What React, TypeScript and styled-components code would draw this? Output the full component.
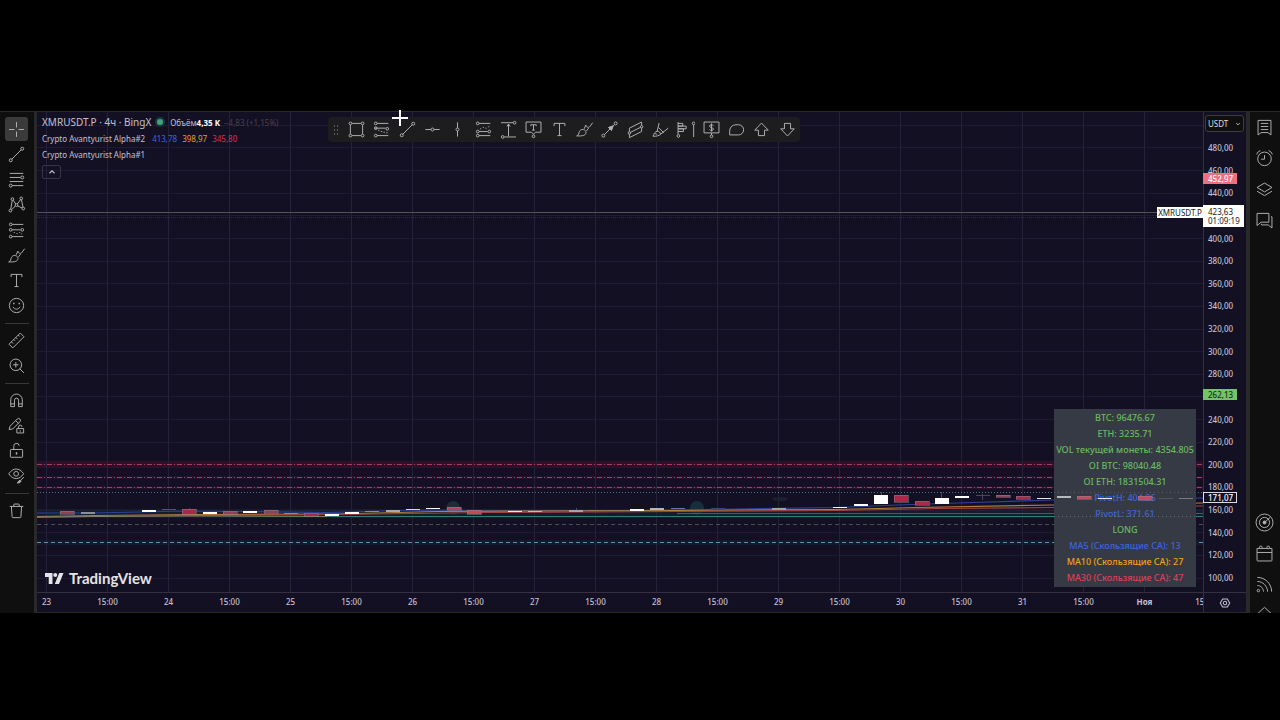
import React from 'react';
import styled, { createGlobalStyle } from 'styled-components';

const Global = createGlobalStyle`
  * { box-sizing: border-box; }
  body { margin: 0; background: #000; }
  body, button, select { font-family: "Noto Sans", "Open Sans", sans-serif; font-size: 8px; }
  button { padding: 0; border: 0; background: none; color: inherit; cursor: pointer; }
`;

/* ---------- page frame ---------- */

const Page = styled.div`
  display: grid;
  grid-template-rows: 111px minmax(502px, 1fr) 107px;
  min-height: 100vh;
`;

const Terminal = styled.main`
  grid-row: 2;
  position: relative;
  display: grid;
  grid-template-columns: 34px minmax(0, 1fr) 30px;
  border-top: 1px solid #2b2b2e;
  background: #0f0f0f;
  color: #c3c0cf;
`;

const Workspace = styled.section`
  display: grid;
  grid-template-columns: minmax(0, 1fr) 43px;
  grid-template-rows: minmax(0, 1fr) 19px;
  border-left: 3px solid #29292c;
  border-right: 4px solid #29292c;
  border-bottom: 1px solid #29292c;
  background: #141024;
`;

/* ---------- icons ---------- */

const Glyph = styled.svg<{ $size: number }>`
  display: block;
  width: ${(p) => p.$size}px;
  height: ${(p) => p.$size}px;
  fill: none;
  stroke: currentColor;
  stroke-width: 1.4;
`;

const shapes = {
  cross: <path d="M14 3v8M14 17v8M3 14h8M17 14h8" />,
  line: <><circle cx="5.5" cy="22.5" r="2.2" /><circle cx="22.5" cy="5.5" r="2.2" /><path d="M7 21 21 7" /></>,
  fib: <><path d="M4 5h20M4 11h16M4 17h20M8 23h16" /><circle cx="22.5" cy="11" r="2.2" /><circle cx="5.5" cy="23" r="2.2" /></>,
  pattern: <><circle cx="5" cy="23" r="2" /><circle cx="8" cy="6" r="2" /><circle cx="14" cy="15" r="2" /><circle cx="21" cy="5" r="2" /><circle cx="24" cy="20" r="2" /><path d="M5.500 21 7.700 8M9.200 7.700 13 13.400M15.200 13.400 20 6.800M21.300 7 23.600 18M6.600 21.800 12.400 16.300M15.700 16 22.300 19.200" /></>,
  position: <><path d="M7.500 5H24M7.500 13H20M7.500 23H24" /><circle cx="5.500" cy="5" r="2" /><circle cx="5.500" cy="13" r="2" /><circle cx="22.500" cy="13" r="2" /><circle cx="5.500" cy="23" r="2" /><path d="M10 17h1.500M14 18.500h1.500M18 17h1.500M21 19h1.500" /></>,
  projection: <><path d="M7.500 5H24M4 12h16M7.500 23H24" /><circle cx="5.500" cy="5" r="2" /><circle cx="5.500" cy="12" r="2" /><circle cx="22.500" cy="13" r="2" /><circle cx="5.500" cy="23" r="2" /><path d="M9 15h2M13 17h2M17 18h2M21 19h2" /></>,
  forecast: <><path d="M7.500 5H24M7.500 17H20M7.500 23H24" /><circle cx="5.500" cy="5" r="2" /><circle cx="5.500" cy="17" r="2" /><circle cx="22.500" cy="17" r="2" /><circle cx="5.500" cy="23" r="2" /><path d="M9 13h1.500M13 11h1.500M17 12h1.500M21 10h1.500" /></>,
  brush: <path d="M2.500 23.500c3-1 3-4 4-6.500 1.500-3.500 6-4 8.500-1.500 2.300 2.500 1 6-2 7-3 1.200-6 1-10.500 1ZM13.500 13 16 7.500c1 3.500 4 4.500 6 2L26 4M17 16l3-4" />,
  text: <path d="M6 9V5h16v4M14 5v18M11 23h6" />,
  smile: <><circle cx="14" cy="14" r="10.500" /><path d="M9 16c1.500 4.500 8.500 4.500 10 0" /><path d="M10 10v2M18 10v2" strokeWidth="2" /></>,
  ruler: <path d="m3 19.500 16.500-16.500 5.500 5.500L8.500 25ZM6.500 16l2.500 2.500M10 12.500l2 2M13 9.500l2.500 2.500M16.500 6l2 2" />,
  zoom: <><circle cx="13" cy="13" r="8.500" /><path d="m19 19 6 6M13 9v8M9 13h8" /></>,
  magnet: <path d="M5.500 23V13a8.500 8.500 0 0 1 17 0v10h-5.500V13.500a3 3 0 0 0-6 0V23ZM5.500 19H11M17 19h5.500" />,
  pencilLock: <><path d="m3 20 1.500-5L15 4.500a2.500 2.500 0 0 1 4 4L8.500 19ZM13 7l4 4" /><path d="M14.500 18.500h10V25h-10ZM17 18.500V16a2.500 2.500 0 0 1 5 0" /><path d="M19.500 21v2" /></>,
  lock: <><path d="M6 12.500h16a1 1 0 0 1 1 1V23a1 1 0 0 1-1 1H6a1 1 0 0 1-1-1v-9.500a1 1 0 0 1 1-1ZM10 12.500V8a4 4 0 0 1 8-1" /><path d="M14 16.500v3.500" strokeWidth="2.200" /></>,
  eye: <><path d="M2.500 11.500C6 6.500 9.500 4.500 13.500 4.500s7.500 2 11 7c-3.500 5-7 7-11 7s-7.500-2-11-7Z" /><circle cx="13.500" cy="11.500" r="3.500" /><path d="M15 25c2 0 1.500-3.500 4-4 2.500 0 2.500 4-4 4ZM20.500 20.500 25 16.500" fill="currentColor" /></>,
  trash: <path d="M4 8h20M10 8V5.500a1 1 0 0 1 1-1h6a1 1 0 0 1 1 1V8M6.500 8l1 15a1.500 1.500 0 0 0 1.500 1.500h10a1.500 1.500 0 0 0 1.500-1.500l1-15" />,
  rect: <><path d="M7.500 5h13M7.500 23h13M5 7.500v13M23 7.500v13" /><circle cx="5" cy="5" r="2" /><circle cx="23" cy="5" r="2" /><circle cx="5" cy="23" r="2" /><circle cx="23" cy="23" r="2" /></>,
  hline: <><circle cx="14" cy="14" r="2.200" /><path d="M3.500 14h8.300M16.200 14h8.300" /></>,
  vline: <><circle cx="14" cy="14" r="2.200" /><path d="M14 3.500v8.300M14 16.200v8.300" /></>,
  range: <><path d="M3 4h18M8 25h17M14 6v18M11.500 9.500 14 6l2.500 3.500" /><circle cx="23" cy="4" r="2" /><circle cx="5.500" cy="25" r="2" /></>,
  callout: <><path d="M3 3h22v15h-8l-3 3-3-3H3ZM10 9V7h8v2M14 7v8M12 15h4" /><circle cx="14" cy="24" r="2" /></>,
  arrow: <><circle cx="5" cy="23" r="2.200" /><circle cx="23" cy="5" r="2.200" /><path d="M6.500 21.500 21.500 6.500" /><path d="m19.500 8.500-2.500 7-4.500-4.500Z" fill="currentColor" /></>,
  channel: <><path d="M5 12 23 3v14L5 26ZM5 19 23 10" /><circle cx="5" cy="19" r="1.800" fill="#1d1d1f" /><circle cx="23" cy="10" r="1.800" fill="#1d1d1f" /></>,
  pitch: <><path d="M3 24c1-4 3-6.500 6-7.500 3 0 5 2 5 4.500-2.500 2.500-6 3-11 3ZM9 16.500l3-12M14 21l11.500-9M11 11l8 8M6 20l3 1" /></>,
  profile: <><path d="M3 3v18M3 5h7v4H3M3 9h12v4H3M3 13h8v4H3M26 7v18" /><circle cx="3.500" cy="23.500" r="2" /><circle cx="26" cy="5" r="2" /></>,
  price: <><path d="M3 3h22v16H3ZM14 19v3M14 5v12M17 8.500c-1-2-6-2-6 .5s6 2 6 4.500-5 2.500-6 .5" /><circle cx="14" cy="24" r="2" /></>,
  blob: <path d="M4 22v-7a9 9 0 0 1 9-8h4a7.500 7.500 0 0 1 0 15Z" />,
  up: <path d="M14 4.500 24 15h-5.500v8h-9v-8H4Z" />,
  down: <path d="M14 23.500 24 13h-5.500V5h-9v8H4Z" />,
  watchlist: <path d="M4.500 3.500h19V25L19 21.500h-10L4.500 25ZM8.500 8h11M8.500 12.500h11M8.500 17h11" />,
  alarm: <><circle cx="14" cy="14.500" r="10" /><path d="M14 9v6H9M2.500 8C3.500 5 5 3.500 8 2.500M25.500 8c-1-3-2.500-4.500-5.500-5.500" /></>,
  layers: <path d="M14 4.500 25 11l-11 6.500L3 11ZM3 16.500 14 23l11-6.500" />,
  chat: <path d="M3 3.500h17.500v13H9l-6 5ZM23.500 8.500H25V25l-5.500-4.500H9.500V19" />,
  radar: <><circle cx="14" cy="14" r="12.500" /><circle cx="14" cy="14" r="7.500" /><circle cx="14" cy="14" r="2.200" fill="currentColor" /><path d="m15 13 7.500-6.500" /></>,
  calendar: <><path d="M3 6.500h22V24a1 1 0 0 1-1 1H4a1 1 0 0 1-1-1ZM3 12.500h22" /><circle cx="8.500" cy="5" r="2" fill="#0f0f0f" /><circle cx="19.500" cy="5" r="2" fill="#0f0f0f" /></>,
  feed: <><path d="M3.500 3.500C15 3.500 24.500 13 24.500 24.500M3.500 9.500c8 0 15 7 15 15M3.500 15.500c5 0 9 4 9 9" /><circle cx="5" cy="23" r="1.800" /></>,
  bell: <path d="M3 12 14 2l11 10" />,
  gear: <><path d="M8.500 4.500h11L25 14l-5.500 9.500h-11L3 14Z" strokeWidth="2.400" /><circle cx="14" cy="14" r="4" strokeWidth="2.400" /></>,
  chevronUp: <path d="m7 17.500 7-7 7 7" strokeWidth="3" />,
  chevronDown: <path d="m8 11 6 6 6-6" strokeWidth="3" />,
};
type IconName = keyof typeof shapes;

const Icon = ({ name, size = 19 }: { name: IconName; size?: number }) => (
  <Glyph $size={size} viewBox="0 0 28 28" aria-hidden="true">{shapes[name]}</Glyph>
);

/* ---------- side bars ---------- */

const ToolRail = styled.nav`
  display: flex;
  flex-direction: column;
  padding: 4px 1px 0 0;
  color: #b4b4b4;
`;

const ToolGroup = styled.div`
  display: flex;
  flex-direction: column;
  justify-content: space-between;
  align-items: center;
  gap: 1px;
  padding: 1px 0;
  &:first-child {
    min-height: 202px;
    padding-bottom: 0;
  }
  & + & {
    margin-top: 9px;
  }
  & + &::before {
    content: "";
    width: 24px;
    border-top: 1px solid #38383a;
    margin: -5px 0 3px;
  }
`;

const ToolButton = styled.button<{ $active?: boolean }>`
  display: grid;
  place-items: center;
  width: 23px;
  height: 24px;
  border-radius: 3px;
  background: ${(p) => (p.$active ? '#3b3b3b' : 'none')};
`;

const WidgetRail = styled.nav`
  display: flex;
  flex-direction: column;
  justify-content: space-between;
  padding-right: 1px;
  color: #b4b4b4;
`;

const WidgetGroup = styled.div<{ $clip?: boolean }>`
  display: flex;
  flex-direction: column;
  height: ${(p) => (p.$clip ? '106px' : 'auto')};
  overflow: hidden;
`;

const WidgetButton = styled.button`
  display: grid;
  place-items: center;
  flex: 0 0 31px;
`;

/* ---------- chart ---------- */

const ChartPane = styled.div`
  position: relative;
  overflow: hidden;
  border-bottom: 1px solid #34303f;
`;

const Layer = styled.svg`
  position: absolute;
  inset: 0;
  width: 100%;
  height: 100%;
`;

const Legend = styled.header`
  position: absolute;
  top: 2px;
  left: 5px;
`;

const LegendRow = styled.div`
  display: flex;
  align-items: center;
  height: 16px;
  gap: 4px;
  white-space: nowrap;
`;

const Symbol = styled.h1`
  margin: 0;
  font-size: 10px;
  font-weight: 400;
`;

const Live = styled.span`
  width: 10px;
  height: 10px;
  margin-right: 1px;
  border: 2px solid #173a39;
  border-radius: 50%;
  background: #43a283;
`;

const Volume = styled.span`
  & b {
    color: #fff;
  }
`;

const Change = styled.span`
  color: #454252;
`;

const Study = styled.span`
  padding-right: 3px;
`;

const Value = styled.span<{ $color: string }>`
  padding-right: 1px;
  color: ${(p) => p.$color};
`;

const Collapse = styled.button`
  display: grid;
  place-items: center;
  width: 19px;
  height: 14px;
  margin-top: 3px;
  border: 1px solid #383446;
  border-radius: 2px;
`;

const DrawBar = styled.div`
  position: absolute;
  top: 5px;
  left: 291px;
  display: grid;
  grid-template-columns: 16px repeat(18, minmax(0, 1fr));
  align-items: center;
  justify-items: center;
  width: 472px;
  height: 25px;
  border-radius: 4px;
  background: #1d1d1f;
  color: #b4b4b4;
`;

const Grip = styled.span`
  width: 6px;
  height: 12px;
  background: radial-gradient(circle, #5a5a5a 1px, transparent 1px) 0 0 / 3px 4px;
`;

const DrawButton = styled.button`
  display: grid;
  place-items: center;
  width: 24px;
  height: 24px;
`;

const Stats = styled.table`
  position: absolute;
  right: 7px;
  bottom: 5px;
  width: 142px;
  padding: 1px 0;
  border-spacing: 0;
  background: #363a45;
  font-size: 9px;
  font-weight: 500;
`;

const Stat = styled.td<{ $color: string }>`
  height: 16px;
  padding: 0;
  line-height: 16px;
  text-align: center;
  white-space: nowrap;
  color: ${(p) => p.$color};
`;

const Brand = styled.a`
  position: absolute;
  left: 8px;
  bottom: 5px;
  display: flex;
  align-items: center;
  gap: 5px;
  color: #e4e3e8;
  font-family: Lato, sans-serif;
  font-size: 15px;
  font-weight: 700;
  line-height: 18px;
  text-decoration: none;
`;

const BrandMark = styled.svg`
  width: 19px;
  height: 11px;
  fill: currentColor;
`;

const SymbolTag = styled.span`
  position: absolute;
  top: 95px;
  right: 0;
  width: 46px;
  height: 11px;
  background: #fff;
  color: #1a1a1a;
  line-height: 11px;
  text-align: center;
`;

/* ---------- axes ---------- */

const PriceAxis = styled.aside`
  position: relative;
  border-left: 1px solid #34303f;
  border-bottom: 1px solid #34303f;
  font-weight: 500;
`;

const PriceList = styled.ol`
  display: flex;
  flex-direction: column;
  justify-content: space-between;
  height: 100%;
  margin: 0;
  padding: 30px 0 8px 4px;
  list-style: none;
  line-height: 12px;
`;

const PriceItem = styled.li`
  height: 12px;
`;

const CurrencyBox = styled.div`
  position: absolute;
  top: 3px;
  left: 1px;
  display: flex;
  align-items: center;
  width: 39px;
  height: 17px;
  border: 1px solid #3d3d40;
  border-radius: 3px;
  background: #0f0f0f;
  color: #dedede;
  & select {
    width: 100%;
    height: 15px;
    padding: 0 0 0 2px;
    border: 0;
    appearance: none;
    background: none;
    color: inherit;
  }
  & svg {
    position: absolute;
    right: 1px;
    pointer-events: none;
  }
`;

const PriceTag = styled.div<{ $bg: string; $fg: string; $top: number; $wide?: boolean; $outline?: boolean }>`
  position: absolute;
  top: ${(p) => p.$top}px;
  left: -1px;
  width: ${(p) => (p.$wide ? 41 : 34)}px;
  padding: ${(p) => (p.$wide ? '2px 0 2px 5px' : '1px 0 1px 5px')};
  outline: ${(p) => (p.$outline ? '1px solid #dcdcdc' : 'none')};
  outline-offset: -1px;
  background: ${(p) => p.$bg};
  color: ${(p) => p.$fg};
  font-weight: ${(p) => (p.$wide ? 400 : 500)};
  line-height: 9px;
`;

const TimeAxis = styled.div`
  overflow: hidden;
`;

const TimeList = styled.ol`
  display: grid;
  grid-auto-flow: column;
  grid-auto-columns: 61px;
  margin: 0 0 0 -21px;
  padding: 0;
  list-style: none;
  line-height: 18px;
  text-align: center;
  font-weight: 500;
`;

const TimeLabel = styled.li<{ $bold?: boolean }>`
  font-weight: ${(p) => (p.$bold ? 700 : 500)};
`;

const AxisSettings = styled.button`
  display: grid;
  place-items: center;
  border-left: 1px solid #34303f;
`;

const Pointer = styled.svg`
  position: absolute;
  top: -2px;
  left: 392px;
  width: 16px;
  height: 16px;
  stroke: #fff;
  stroke-width: 2;
`;

/* ---------- data ---------- */

const toolGroups: [IconName, string][][] = [
  [['cross', 'Перекрестие'], ['line', 'Линия тренда'], ['fib', 'Фибоначчи'], ['pattern', 'Паттерны'], ['position', 'Прогноз'], ['brush', 'Кисть'], ['text', 'Текст'], ['smile', 'Значки']],
  [['ruler', 'Линейка'], ['zoom', 'Увеличить']],
  [['magnet', 'Магнит'], ['pencilLock', 'Режим рисования'], ['lock', 'Заблокировать'], ['eye', 'Скрыть']],
  [['trash', 'Удалить']],
];
const drawTools: IconName[] = ['rect', 'projection', 'line', 'hline', 'vline', 'forecast', 'range', 'callout', 'text', 'brush', 'arrow', 'channel', 'pitch', 'profile', 'price', 'blob', 'up', 'down'];
const widgetsTop: [IconName, string][] = [['watchlist', 'Список'], ['alarm', 'Оповещения'], ['layers', 'Объекты'], ['chat', 'Чаты']];
const widgetsBottom: [IconName, string][] = [['radar', 'Скринер'], ['calendar', 'Календарь'], ['feed', 'Лента'], ['bell', 'Уведомления']];

const green = '#66bb5f';
const blue = '#3c65dc';
const stats: [string, string][] = [
  ['BTC: 96476.67', green],
  ['ETH: 3235.71', green],
  ['VOL текущей монеты: 4354.805', green],
  ['OI BTC: 98040.48', green],
  ['OI ETH: 1831504.31', green],
  ['PivotH: 404.86', blue],
  ['PivotL: 371.61', blue],
  ['LONG', green],
  ['MA5 (Скользящие СА): 13', blue],
  ['MA10 (Скользящие СА): 27', '#f0a01c'],
  ['MA30 (Скользящие СА): 47', '#d84455'],
];

const prices = Array.from({ length: 20 }, (_, i) => 480 - i * 20);
/* grid prices whose labels give way to a price tag */
const tagged = [420, 260];
const times = ['23', '24', '25', '26', '27', '28', '29', '30', '31', 'Ноя'].flatMap((d) => [d, '15:00']);

const priceY = (p: number) => 466 - (p - 100) * 1.1316;
const barX = (i: number) => 10 + i * 20.34;

const red = '#a72a48';
const dimRed = '#8c4358';
/* bar index, top, bottom, colour */
const candles: [number, number, number, string][] = [
  [1, 399, 402, dimRed], [2, 400, 402, '#8f8d97'], [5, 398, 400, '#fff'], [6, 397, 398, '#55566e'],
  [7, 397, 402, red], [8, 400, 402, '#fff'], [9, 399, 402, dimRed], [10, 399, 401, '#fff'],
  [11, 398, 401, dimRed], [12, 401, 402, '#9a8585'], [13, 401, 404, red], [14, 402, 404, '#fff'],
  [15, 400, 402, '#fff'], [16, 399, 400, '#8d9183'], [17, 398, 400, '#a9aaa9'], [18, 397, 398, '#d8d8dd'],
  [19, 396, 397, '#fff'], [20, 395, 398, '#ae4456'], [21, 398, 402, '#c04d58'], [23, 399, 400, '#e8e8e8'],
  [24, 399, 400, '#c9b9b0'], [26, 398, 400, '#a9a1a5'], [27, 398, 399, '#98745f'], [28, 398, 399, '#98745f'],
  [29, 397, 399, '#fff'], [30, 396, 398, '#b4b2cb'], [31, 396, 397, '#6a70ba'], [33, 396, 398, '#3b4584'],
  [36, 396, 398, '#a5a0a8'], [39, 395, 396, '#fff'], [40, 392, 394, '#fff'], [41, 383, 392, '#fff'],
  [42, 383, 390, red], [43, 389, 393, red], [44, 386, 392, '#fff'], [45, 384, 386, '#fff'],
  [46, 383, 384, '#35514f'], [47, 383, 385, dimRed], [48, 384, 387, red], [49, 386, 387, '#e4e4ee'],
  [50, 384, 386, '#b5b8bd'], [51, 384, 387, '#c44a5c'], [52, 386, 387, '#e6e8f2'], [54, 384, 388, '#c44a5c'],
  [55, 386, 387, '#50545f'], [56, 386, 387, '#777b87'],
];
const outlined = [red, dimRed, '#c44a5c', '#ae4456', '#c04d58'];

/* y, colour, dash pattern */
const levels: [number, string, string | undefined][] = [
  [352, '#a83a5e', '5 2 1 2'], [365, '#a83a5e', '5 2 1 2'], [375, '#a83a5e', '5 2 1 2'],
  [380, '#4b7284', '1 2'], [412, '#50494f', '4 3'], [430, '#5a97a6', '4 3'],
  [401, '#2b6a6a', undefined], [404, '#2f7d78', undefined],
];
const bands: [number, number, string][] = [
  [349, 7, '#300f29'], [364, 3, '#260f2a'], [374, 3, '#2a0f2b'], [428, 5, '#131a30'], [397, 9, '#151c2a'],
];

const Gridlines = () => (
  <Layer aria-hidden="true">
    {bands.map(([y, h, c]) => <rect key={y} x="0" y={y} width="100%" height={h} fill={c} />)}
    <g stroke="#252139" shapeRendering="crispEdges">
      {times.map((_, i) => <line key={i} x1={Math.floor(barX(i * 3)) - 0.5} x2={Math.floor(barX(i * 3)) - 0.5} y1="0" y2="100%" />)}
      {[500, ...prices].map((p) => <line key={p} x1="0" x2="100%" y1={priceY(p)} y2={priceY(p)} strokeOpacity="0.700" />)}
    </g>
    <g fill="#1c2d38">
      <circle cx="416" cy="396" r="7" />
      <circle cx="660" cy="396" r="7" />
      <ellipse cx="743" cy="387" rx="8" ry="2" fill="#1b2130" />
    </g>
    <g shapeRendering="crispEdges">
      {levels.map(([y, c, dash]) => <line key={y} x1={y === 401 ? 640 : y === 404 ? 290 : 0} x2="100%" y1={y + 0.5} y2={y + 0.5} stroke={c} strokeDasharray={dash} />)}
      <line x1="0" x2="100%" y1="100.500" y2="100.500" stroke="#55525f" />
      <line x1="0" x2="100%" y1="105.500" y2="105.500" stroke="#302c40" strokeDasharray="1 1" />
    </g>
    <g fill="none" strokeWidth="1.200">
      <path d="M0 401H55L150 399 290 400.500 380 398 560 399 700 397 800 395.500 860 393 920 391 1016 388 1166 386" stroke="#2c429c" />
      <path d="M0 404.500 60 403.500 160 402.500 300 402 400 399.500 640 398.500 800 397.500 880 395.500 1016 393 1166 391" stroke="#b5803c" />
      <path d="M0 405.500 80 404 300 402.500 450 400.500 640 399.500 800 398.500 900 396.500 1016 395.500 1166 394" stroke="#a34143" />
      <path d="M0 405 60 404.500 150 404 290 404.500" stroke="#77806a" />
    </g>
  </Layer>
);

const Candles = () => (
  <Layer aria-hidden="true">
    <g stroke="#4a4a58" shapeRendering="crispEdges">
      <path d="M844.500 380v6M904.500 380v6M945.500 382v6M152.500 396v2M539.500 396v2" />
    </g>
    <line x1="1017" x2="1159" y1="380.500" y2="380.500" stroke="#4e5c66" strokeDasharray="1 3" />
    <line x1="1017" x2="1159" y1="404.500" y2="404.500" stroke="#5c6c74" strokeDasharray="1 3" />
    <g shapeRendering="crispEdges">
      {candles.map(([i, top, bottom, c]) => (
        <rect key={i} x={Math.round(barX(i)) - 7} y={top} width="14" height={bottom - top} fill={c}
          stroke={outlined.includes(c) ? '#94808e' : 'none'} strokeOpacity="0.500" strokeWidth="1" />
      ))}
    </g>
  </Layer>
);

export default function App() {
  return (
    <Page>
      <Global />
      <Terminal>
        <ToolRail aria-label="Инструменты">
          {toolGroups.map((group, g) => (
            <ToolGroup key={g}>
              {group.map(([name, label]) => (
                <ToolButton key={name} $active={name === 'cross'} aria-label={label}><Icon name={name} /></ToolButton>
              ))}
            </ToolGroup>
          ))}
        </ToolRail>

        <Workspace>
          <ChartPane>
            <Gridlines />
            <Legend>
              <LegendRow>
                <Symbol>XMRUSDT.P · 4ч · BingX</Symbol>
                <Live />
                <Volume>Объём<b>4,35 K</b></Volume>
                <Change>−4,83 (+1,15%)</Change>
              </LegendRow>
              <LegendRow>
                <Study>Crypto Avantyurist Alpha#2</Study>
                <Value $color="#3566e0">413,78</Value>
                <Value $color="#f09a1a">398,97</Value>
                <Value $color="#d2344f">345,80</Value>
              </LegendRow>
              <LegendRow><Study>Crypto Avantyurist Alpha#1</Study></LegendRow>
              <Collapse aria-label="Свернуть"><Icon name="chevronUp" size={10} /></Collapse>
            </Legend>
            <Stats>
              <tbody>
                {stats.map(([label, color]) => <tr key={label}><Stat $color={color}>{label}</Stat></tr>)}
              </tbody>
            </Stats>
            <Candles />
            <Brand href="#">
              <BrandMark viewBox="0 0 38 22" aria-hidden="true">
                <path d="M0 0h15v22H7.500V8H0ZM28 22h-8.500L28.500 0H37Z" /><circle cx="20.500" cy="4" r="4" />
              </BrandMark>
              TradingView
            </Brand>
            <SymbolTag>XMRUSDT.P</SymbolTag>
            <DrawBar role="toolbar" aria-label="Избранные инструменты">
              <Grip />
              {drawTools.map((name) => <DrawButton key={name} aria-label={name}><Icon name={name} /></DrawButton>)}
            </DrawBar>
          </ChartPane>

          <PriceAxis>
            <PriceList>{prices.map((p) => <PriceItem key={p}>{tagged.includes(p) ? '' : `${p},00`}</PriceItem>)}</PriceList>
            <CurrencyBox>
              <select aria-label="Валюта" defaultValue="USDT"><option>USDT</option></select>
              <Icon name="chevronDown" size={8} />
            </CurrencyBox>
            <PriceTag $bg="#ee6f80" $fg="#fff" $top={61}>452,97</PriceTag>
            <PriceTag $bg="#fff" $fg="#1a1a1a" $top={93} $wide>423,63<br />01:09:19</PriceTag>
            <PriceTag $bg="#72c466" $fg="#14301a" $top={277}>262,13</PriceTag>
            <PriceTag $bg="#141024" $fg="#fff" $top={380} $outline>171,07</PriceTag>
          </PriceAxis>

          <TimeAxis>
            <TimeList>
              {times.map((t, i) => <TimeLabel key={i} $bold={t === 'Ноя'}>{t}</TimeLabel>)}
            </TimeList>
          </TimeAxis>
          <AxisSettings aria-label="Настройки шкалы"><Icon name="gear" size={12} /></AxisSettings>
        </Workspace>

        <WidgetRail aria-label="Виджеты">
          <WidgetGroup>
            {widgetsTop.map(([name, label]) => <WidgetButton key={name} aria-label={label}><Icon name={name} /></WidgetButton>)}
          </WidgetGroup>
          <WidgetGroup $clip>
            {widgetsBottom.map(([name, label]) => <WidgetButton key={name} aria-label={label}><Icon name={name} /></WidgetButton>)}
          </WidgetGroup>
        </WidgetRail>
        <Pointer viewBox="0 0 16 16" aria-hidden="true"><path d="M8 0v16M0 8h16" /></Pointer>
      </Terminal>
    </Page>
  );
}
